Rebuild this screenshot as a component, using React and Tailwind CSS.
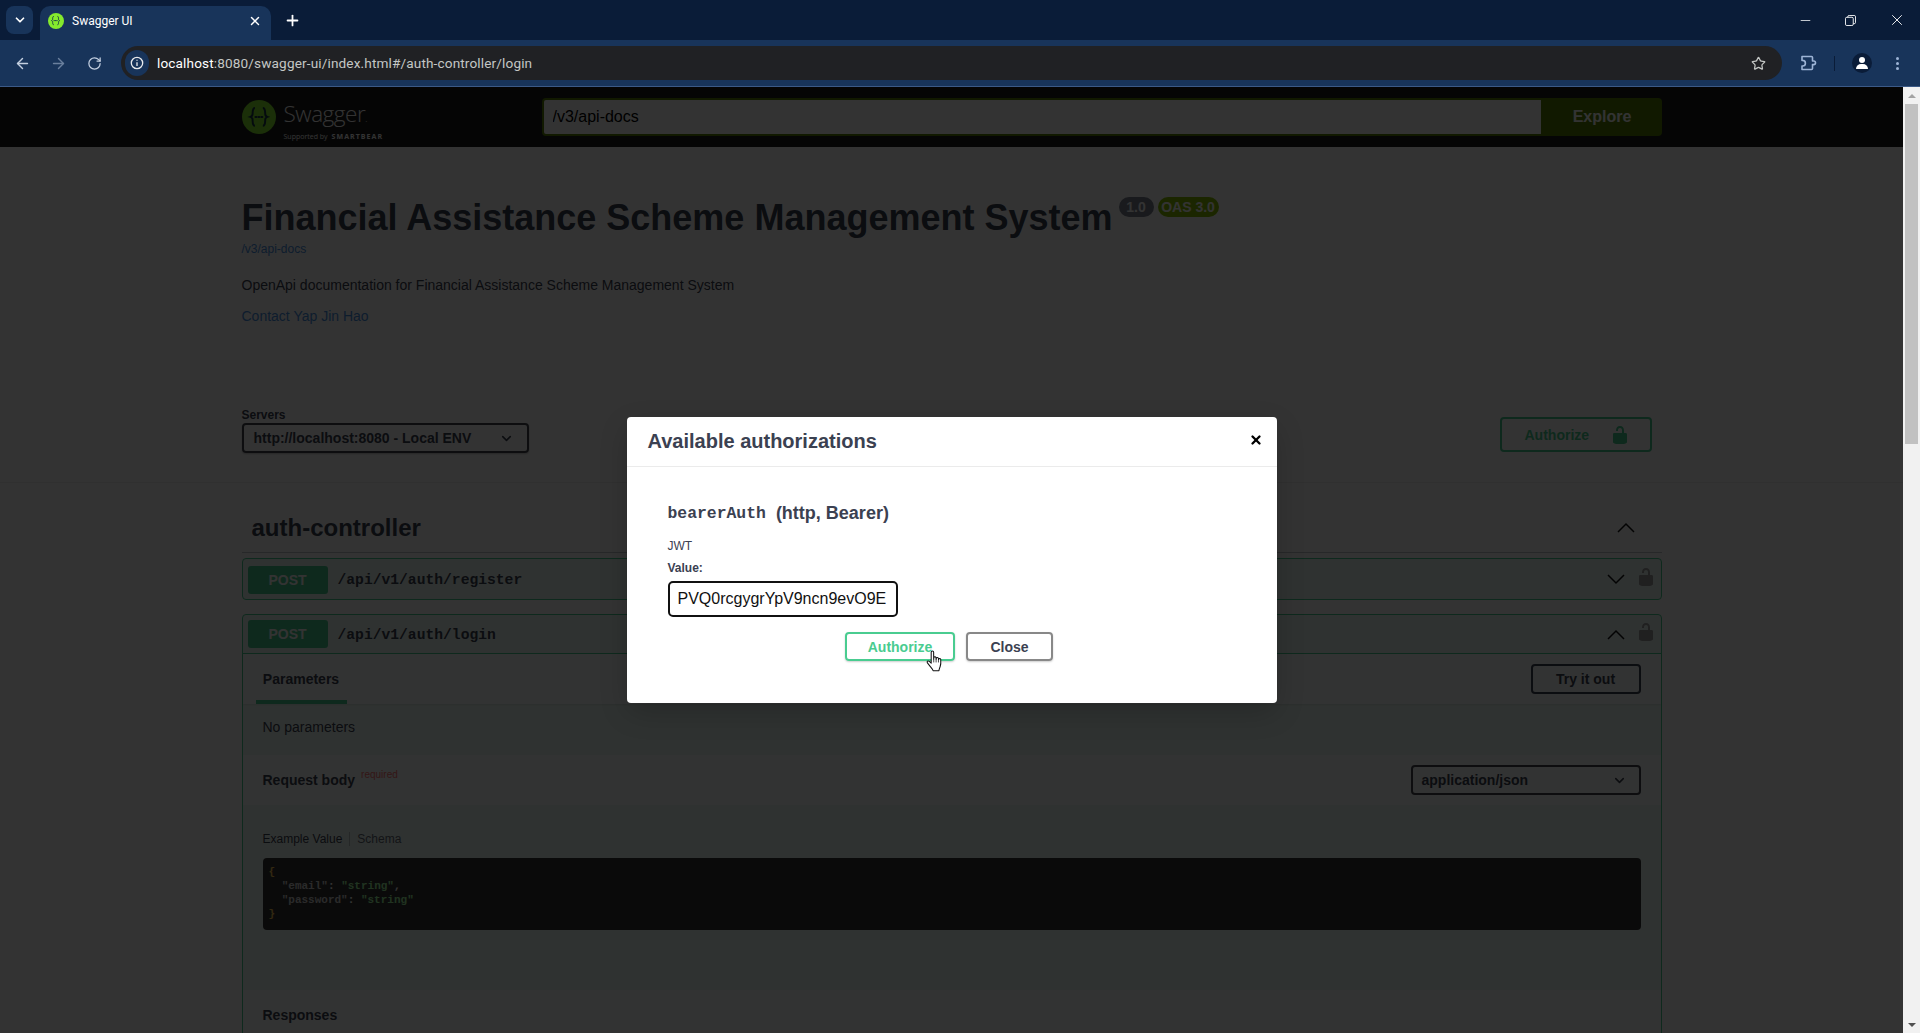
import { ArrowLeft, ArrowRight, RotateCw, Star, X, Plus, ChevronDown, Minus } from 'lucide-react';

const lockPath = 'M15.8 8H14V5.6C14 2.703 12.665 1 10 1 7.334 1 6 2.703 6 5.6V6h2v-.801C8 3.754 8.797 3 10 3c1.203 0 2 .754 2 2.199V8H4c-.553 0-1 .646-1 1.199V17c0 .549.428 1.139.951 1.307l1.197.387C5.672 18.861 6.55 19 7.1 19h5.8c.549 0 1.428-.139 1.951-.307l1.196-.387c.524-.167.953-.757.953-1.306V9.199C17 8.646 16.352 8 15.8 8z';

function Lock({ className }) {
  return (
    <svg viewBox="0 0 20 20" className={className} fill="currentColor">
      <path d={lockPath} />
    </svg>
  );
}

function Arrow({ up, className }) {
  return (
    <svg viewBox="0 0 20 11" className={className} fill="none" stroke="currentColor" strokeWidth="1.5">
      <path d={up ? 'M2 10 L10 2 L18 10' : 'M2 1 L10 9 L18 1'} />
    </svg>
  );
}

function SwaggerMark({ className, dot = 'bg-[#85ea2d]', ink = '#173647' }) {
  return (
    <span className={`${className} ${dot} rounded-full flex items-center justify-center`}>
      <svg viewBox="0 0 24 24" className="w-[70%] h-[70%]" fill="none" stroke={ink} strokeWidth="2">
        <path d="M8 3 C5 3 6 8 5.5 10 C5 11.5 3.5 12 3.5 12 C3.5 12 5 12.5 5.5 14 C6 16 5 21 8 21" />
        <path d="M16 3 C19 3 18 8 18.5 10 C19 11.5 20.5 12 20.5 12 C20.5 12 19 12.5 18.5 14 C18 16 19 21 16 21" />
        <path d="M8.5 12h1M11.5 12h1M14.5 12h1" strokeLinecap="round" />
      </svg>
    </span>
  );
}

function BrowserChrome() {
  return (
    <div className="shrink-0 font-['Roboto',sans-serif]">
      <div className="h-10 bg-[#0a1c38] flex items-end relative">
        <div className="w-[27px] h-[28px] ml-[6px] mb-[6px] rounded-lg bg-[#18345a] flex items-center justify-center text-white">
          <ChevronDown size={14} strokeWidth={3} />
        </div>
        <div className="w-[231px] h-[34px] ml-[7px] rounded-t-[10px] bg-[#18345a] flex items-center pl-2 pr-[9px] pb-1">
          <SwaggerMark className="w-4 h-4 shrink-0" ink="#173647" />
          <span className="ml-2 text-xs text-white flex-1">Swagger UI</span>
          <X size={14} strokeWidth={2.5} className="text-white" />
        </div>
        <Plus size={17} strokeWidth={2.5} className="text-white ml-[13px] mb-[11px]" />
        <div className="ml-auto flex items-center text-white self-start h-10">
          <Minus size={15} strokeWidth={1.2} className="mr-[32px]" />
          <svg viewBox="0 0 12 12" className="w-[11px] h-[11px] mr-[32px]" fill="none" stroke="currentColor" strokeWidth="1">
            <rect x="0.5" y="2.5" width="8.5" height="9" rx="1.5" />
            <path d="M3 2.5V2a1.5 1.5 0 0 1 1.5-1.5H10A1.5 1.5 0 0 1 11.500 2v6A1.5 1.5 0 0 1 10 9.500h-1" />
          </svg>
          <X size={18} strokeWidth={1.2} className="mr-[14px]" />
        </div>
      </div>
      <div className="h-[47px] bg-[#18345a] border-b border-[#3c5a87] flex items-center">
        <ArrowLeft size={17} strokeWidth={2} className="text-[#c3cfe0] ml-[14px]" />
        <ArrowRight size={17} strokeWidth={2} className="text-[#6a7f9d] ml-[19px]" />
        <RotateCw size={15} strokeWidth={2} className="text-[#c3cfe0] ml-5" />
        <div className="ml-[19px] w-[1661px] h-[34px] rounded-full bg-[#202124] flex items-center pl-1">
          <span className="w-[24px] h-[26px] ml-0 rounded-full bg-[#18345a] flex items-center justify-center">
            <svg viewBox="0 0 16 16" className="w-[14px] h-[14px]" fill="none" stroke="#e8eaed" strokeWidth="1.5">
              <circle cx="8" cy="8" r="6.500" />
              <path d="M8 7v4.500M8 4.200v1.300" />
            </svg>
          </span>
          <span className="ml-[8px] text-[13.6px] tracking-[0.01em] text-[#c4c7c5]">
            <span className="text-white">localhost</span>:8080/swagger-ui/index.html#/auth-controller/login
          </span>
          <Star size={15} strokeWidth={2} className="text-[#c4c7c5] ml-auto mr-[16px]" />
        </div>
        <svg viewBox="0 0 17 16" className="w-[17px] h-4 ml-[18px]" fill="none" stroke="#9db4d6" strokeWidth="1.600" strokeLinejoin="round">
          <path d="M2 1.500h9.500a1 1 0 0 1 1 1V6h1.200a1.800 1.800 0 0 1 0 3.600h-1.200v3.900a1 1 0 0 1-1 1H2V11h.6a2.800 2.800 0 0 0 0-5.600H2z" />
        </svg>
        <span className="w-px h-[15px] bg-[#0a1c38] ml-[17px]" />
        <span className="w-5 h-5 ml-[17px] rounded-full bg-[#0a1c38] flex flex-col items-center justify-center gap-px">
          <span className="w-[6px] h-[6px] rounded-full bg-white" />
          <span className="w-[12px] h-[5px] rounded-t-full bg-white" />
        </span>
        <span className="ml-[24px] flex flex-col gap-[2px]">
          <span className="w-[3px] h-[3px] rounded-full bg-[#9db4d6]" />
          <span className="w-[3px] h-[3px] rounded-full bg-[#9db4d6]" />
          <span className="w-[3px] h-[3px] rounded-full bg-[#9db4d6]" />
        </span>
      </div>
    </div>
  );
}

function Topbar() {
  return (
    <div className="h-[60px] bg-[#1b1b1b] shrink-0">
      <div className="w-[1420px] mx-auto h-full flex items-center">
        <SwaggerMark className="w-[34px] h-[34px] shrink-0" />
        <div className="ml-2 w-[258px] flex flex-col text-white h-[38px] justify-between">
          <span className="font-['Open_Sans',sans-serif] text-[22.5px] leading-[26px] pt-[3px] font-light tracking-[-0.02em]">
            Swagger<span className="text-[9px]">.</span>
          </span>
          <span className="flex items-center gap-1 leading-[9px]">
            <span className="text-[7px] font-['Open_Sans',sans-serif]">Supported by</span>
            <span className="text-[7px] tracking-[0.15em] font-bold font-['Open_Sans',sans-serif]">SMARTBEAR</span>
          </span>
        </div>
        <div className="flex-1 flex h-[38px]">
          <input readOnly value="/v3/api-docs" className="flex-1 h-[38px] border-2 border-[#547f00] rounded-l bg-white px-[9px] text-base text-black outline-none" />
          <div className="w-[119px] bg-[#547f00] rounded-r flex items-center justify-center text-white text-base font-bold">Explore</div>
        </div>
      </div>
    </div>
  );
}

function Info() {
  return (
    <div className="w-[1420px] mx-auto pt-[50px] h-[240px] shrink-0">
      <div className="flex items-start">
        <h2 className="text-[36px] leading-[41px] font-bold text-[#3b4151]">Financial Assistance Scheme Management System</h2>
        <span className="ml-[6px] h-5 w-[35px] rounded-full bg-[#7d8492] text-white text-sm font-bold flex items-center justify-center">1.0</span>
        <span className="ml-[4px] h-5 w-[61px] rounded-full bg-[#89bf04] text-white text-sm font-bold flex items-center justify-center">OAS 3.0</span>
      </div>
      <div className="text-xs leading-[14px] text-[#4990e2] mt-[4px]">/v3/api-docs</div>
      <p className="text-sm leading-4 text-[#3b4151] mt-[21px]">OpenApi documentation for Financial Assistance Scheme Management System</p>
      <p className="text-sm leading-4 text-[#4990e2] mt-[15px]">Contact Yap Jin Hao</p>
    </div>
  );
}

function SchemeBar() {
  return (
    <div className="h-[96px] bg-white border-b border-[#f0f0f0] shrink-0">
      <div className="w-[1420px] mx-auto flex justify-between pt-[21px]">
        <div>
          <div className="text-xs leading-[14px] font-bold text-[#3b4151]">Servers</div>
          <div className="mt-[1px] w-[287px] h-[30px] border-2 border-[#41444e] rounded flex items-center justify-between pl-[10px] pr-[13px] text-sm font-bold text-[#3b4151] shadow-[0_1px_2px_rgba(0,0,0,0.25)]">
            <span>http://localhost:8080 - Local ENV</span>
            <ChevronDown size={15} strokeWidth={2.5} />
          </div>
        </div>
        <div className="mr-[10px] mt-[9px] w-[152px] h-[35px] border-2 border-[#49cc90] rounded flex items-center pl-[23px] text-sm font-bold text-[#49cc90]">
          <span>Authorize</span>
          <Lock className="w-5 h-5 ml-[21px]" />
        </div>
      </div>
    </div>
  );
}

function OpSummary({ path, open }) {
  return (
    <div className={`h-[39px] flex items-center pl-[5px] pr-[5px] ${open ? 'border-b border-[#49cc90]' : ''}`}>
      <span className="w-[80px] h-7 bg-[#49cc90] rounded-[3px] text-white text-sm font-bold flex items-center justify-center">POST</span>
      <span className={`ml-[10px] font-['Liberation_Mono',monospace] text-[14.67px] font-bold text-[#3b4151] flex-1 ${open ? 'pt-[2px]' : ''}`}>{path}</span>
      <Arrow up={open} className="w-[20px] h-[11px] text-[#111]" />
      <Lock className="w-5 h-5 ml-[10px] mb-[5px] text-[#a0a0a0]" />
    </div>
  );
}

function OpBody() {
  return (
    <div>
      <div className="h-[50px] bg-white/80 flex items-center justify-between pl-[13px] pr-[20px] shadow-[0_1px_2px_rgba(0,0,0,0.1)]">
        <div className="w-[91px] h-[50px] border-b-4 border-[#49cc90] flex items-center justify-center text-sm font-bold text-[#3b4151] pt-[3px]">Parameters</div>
        <div className="w-[110px] h-[30px] border-2 border-[#3b4151] rounded flex items-center justify-center text-sm font-bold text-[#3b4151]">Try it out</div>
      </div>
      <div className="h-[51px] flex items-center pl-5 pb-[5px] text-sm text-[#3b4151]">No parameters</div>
      <div className="h-[50px] bg-white/80 flex items-center justify-between pl-5 pr-5">
        <div className="flex items-start">
          <span className="text-sm font-bold text-[#3b4151]">Request body</span>
          <span className="ml-[6px] text-[10px] leading-[10px] text-[#f00]/60">required</span>
        </div>
        <div className="w-[230px] h-[30px] border-2 border-[#41444e] rounded flex items-center justify-between pl-[9px] pr-[12px] text-sm font-bold text-[#3b4151]">
          <span>application/json</span>
          <ChevronDown size={15} strokeWidth={2.5} />
        </div>
      </div>
      <div className="h-[185px] px-5 pt-[26px]">
        <div className="flex items-center text-xs leading-[16px] text-[#3b4151]">
          <span className="font-normal">Example Value</span>
          <span className="w-px h-[14px] bg-[#3b4151]/30 mx-[7px]" />
          <span className="opacity-80">Schema</span>
        </div>
        <pre className="mt-[11px] h-[72px] rounded bg-[#333] px-[6px] pt-[7px] font-['Liberation_Mono',monospace] text-[11px] leading-[14px] font-bold text-white">
          <span className="text-[#f8c555]">{'{'}</span>{'\n  '}
          <span className="text-[#d3d3d3]">"email"</span>: <span className="text-[#a2fca2]">"string"</span>,{'\n  '}
          <span className="text-[#d3d3d3]">"password"</span>: <span className="text-[#a2fca2]">"string"</span>{'\n'}
          <span className="text-[#f8c555]">{'}'}</span>
        </pre>
      </div>
      <div className="h-[50px] bg-white/80 flex items-center pl-5 text-sm font-bold text-[#3b4151]">Responses</div>
    </div>
  );
}

function Tag() {
  return (
    <div className="w-[1420px] mx-auto pt-[26px] shrink-0">
      <div className="h-11 border-b border-[#3b4151]/30 flex items-center justify-between pl-[10px] pr-[26px] pb-[6px]">
        <h3 className="text-2xl font-bold text-[#3b4151]">auth-controller</h3>
        <Arrow up className="w-[20px] h-[11px] text-[#111]" />
      </div>
      <div className="mt-[5px] border border-[#49cc90] rounded bg-[#49cc90]/10 pt-px -mb-px">
        <OpSummary path="/api/v1/auth/register" />
      </div>
      <div className="mt-[15px] border border-[#49cc90] rounded bg-[#49cc90]/10">
        <OpSummary path="/api/v1/auth/login" open />
        <OpBody />
      </div>
    </div>
  );
}

function AuthModal() {
  return (
    <div className="absolute inset-0 bg-black/80 flex items-center justify-center">
      <div className="relative w-[650px] h-[286px] bg-white rounded shadow-[0_10px_30px_-2px_rgba(0,0,0,0.2)]">
        <div className="h-[50px] border-b border-[#ebebeb] flex items-center justify-between pl-[21px] pr-[14px] pb-px">
          <h3 className="text-xl font-bold text-[#3b4151]">Available authorizations</h3>
          <X size={14} strokeWidth={4} className="text-black mb-[2px]" />
        </div>
        <div className="pl-[41px] pt-[35px]">
          <h4 className="h-[22px] text-[18px] leading-[22px] font-bold text-[#3b4151]">
            <code className="font-['Liberation_Mono',monospace] text-[16.4px] align-[1px]">bearerAuth</code>&nbsp; (http, Bearer)
          </h4>
          <p className="mt-[14px] text-xs leading-4 text-[#3b4151]">JWT</p>
          <p className="mt-[6px] text-xs leading-4 font-bold text-[#3b4151]">Value:</p>
          <input
            readOnly
            value="PVQ0rcgygrYpV9ncn9evO9E"
            className="mt-[5px] block w-[230px] h-[36px] border-2 border-[#111] rounded-[5px] bg-white pl-[8px] text-base text-[#111] outline-none"
          />
        </div>
        <div className="flex justify-center mt-[15px] gap-[11px] pr-[5px]">
          <div className="w-[110px] h-[29px] border-2 border-[#49cc90] rounded flex items-center justify-center text-sm font-bold text-[#49cc90] shadow-[0_1px_2px_rgba(0,0,0,0.2)]">Authorize</div>
          <div className="w-[87px] h-[29px] border-2 border-[#888] rounded flex items-center justify-center text-sm font-bold text-[#3b4151] shadow-[0_1px_2px_rgba(0,0,0,0.2)]">Close</div>
        </div>
        {/* mouse pointer sitting on the Authorize button */}
        <svg viewBox="0 0 18 24" className="absolute left-[299px] top-[233px] w-[17px] h-[23px]" fill="#fff" stroke="#111" strokeWidth="1.100" strokeLinejoin="round">
          <path d="M5.500 2.200a1.300 1.300 0 0 1 2.600 0V9.500l.2-1.600a1.200 1.200 0 0 1 2.300 0l.1 1.900.2-1.300a1.200 1.200 0 0 1 2.300.2l.1 1.500.3-.8a1.100 1.100 0 0 1 2 .4c.2 2.500.1 5.500-.6 7.500-.6 1.700-1 2.400-1.300 4.400H7.500c-.5-1.500-1.500-2.500-2.700-4L1.500 13.500c-1-1.500.7-2.800 2-1.600l2 1.800z" />
          <path d="M8.200 9.500v3.500M10.700 9.800v3.200M13.200 10.500v2.500" fill="none" strokeWidth="0.800" />
        </svg>
      </div>
    </div>
  );
}

function Scrollbar() {
  return (
    <div className="w-[17px] shrink-0 bg-[#f1f1f1] flex flex-col items-center">
      <div className="h-[17px] flex items-center justify-center">
        <div className="w-0 h-0 border-x-[4px] border-x-transparent border-b-[4px] border-b-[#a3a3a3]" />
      </div>
      <div className="w-[13px] h-[340px] bg-[#c1c1c1]" />
      <div className="mt-auto h-[17px] flex items-center justify-center">
        <div className="w-0 h-0 border-x-[4px] border-x-transparent border-t-[4px] border-t-[#505050]" />
      </div>
    </div>
  );
}

export default function App() {
  return (
    <div className="h-[1033px] flex flex-col overflow-hidden bg-white font-['Liberation_Sans',Arial,sans-serif]">
      <BrowserChrome />
      <div className="flex-1 flex min-h-0">
        <div className="relative flex-1 min-w-0 overflow-hidden flex flex-col">
          <Topbar />
          <Info />
          <SchemeBar />
          <Tag />
          <AuthModal />
        </div>
        <Scrollbar />
      </div>
    </div>
  );
}
